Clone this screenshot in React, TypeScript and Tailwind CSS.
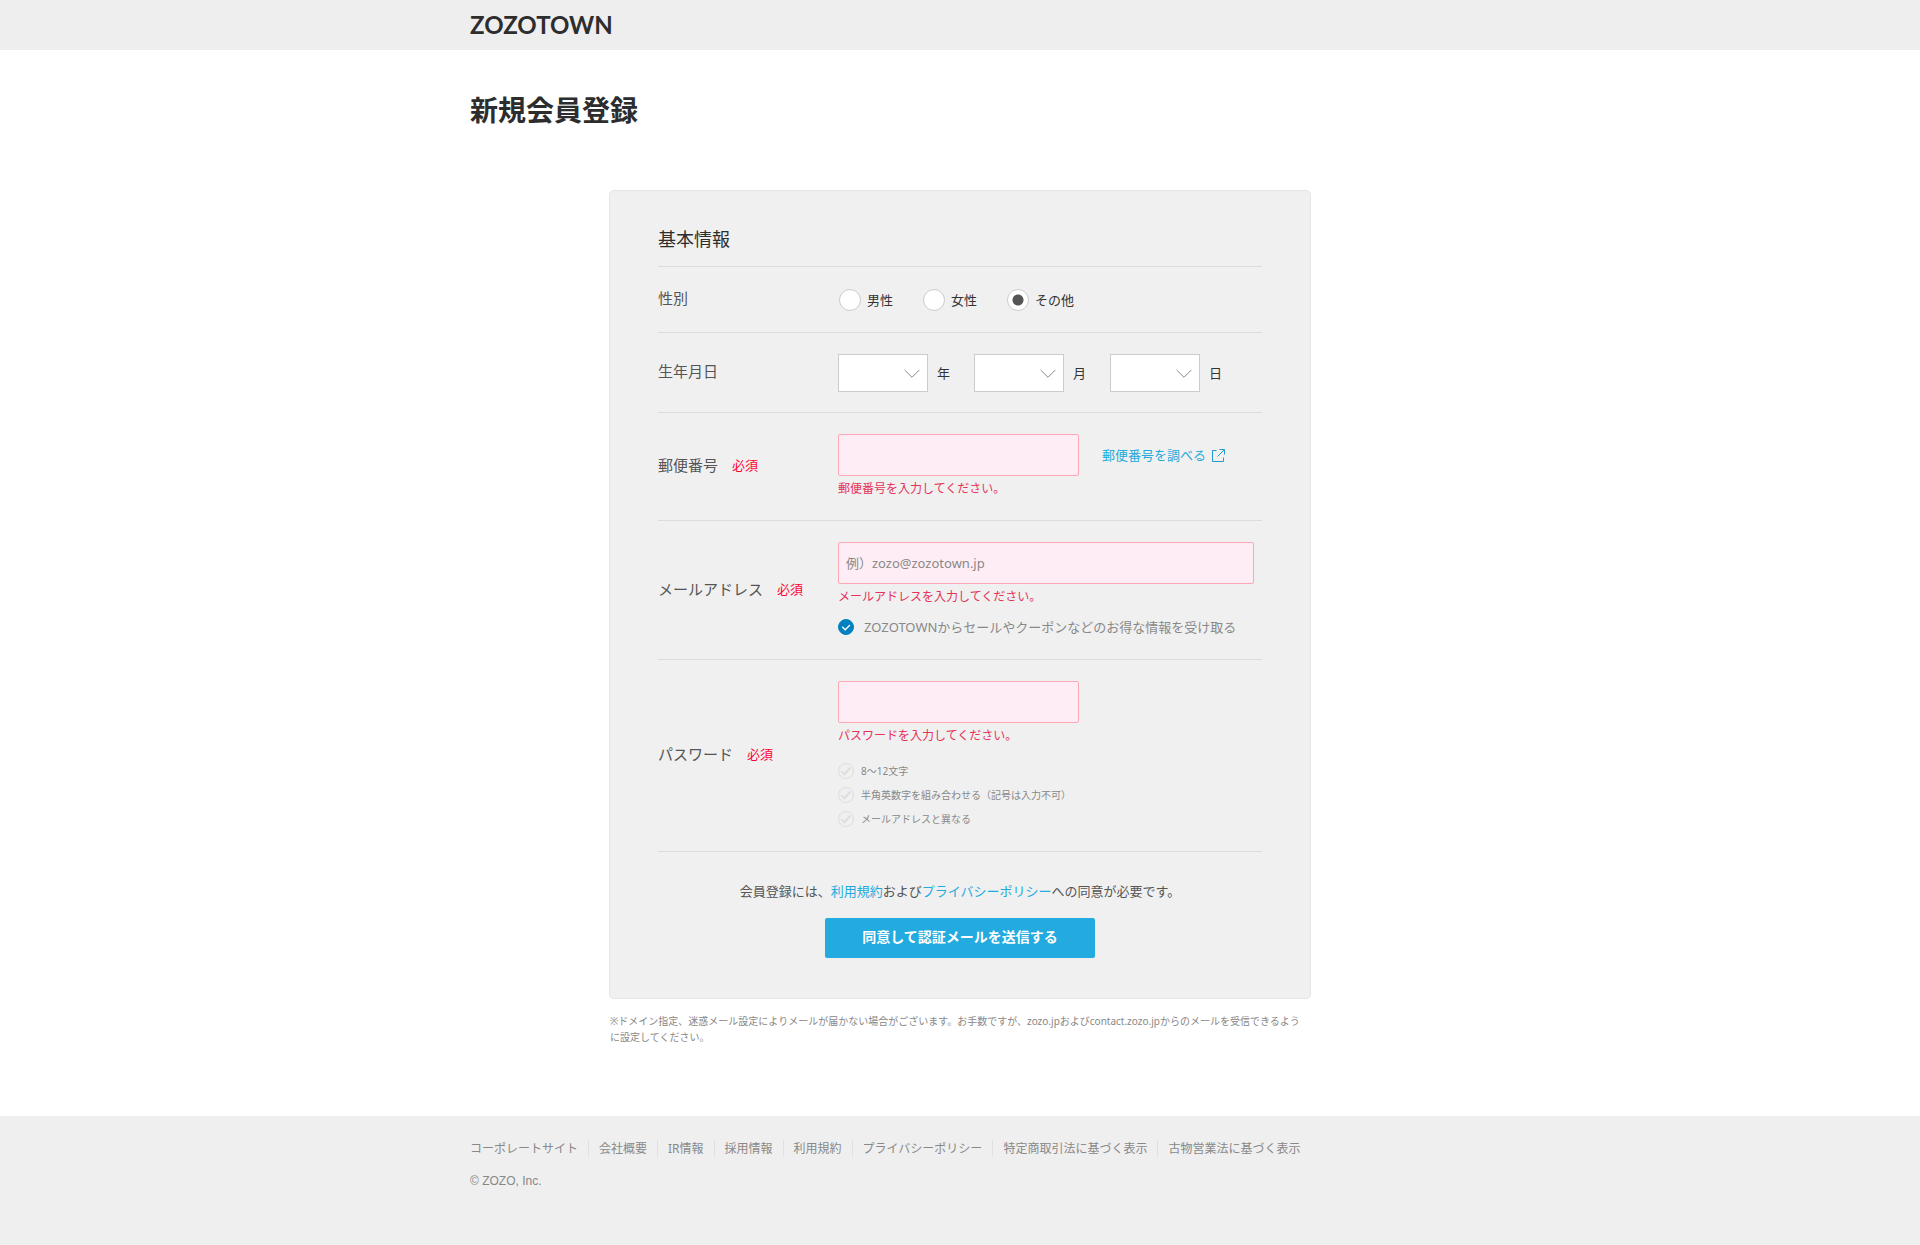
import { useState } from 'react';
import type { ReactNode } from 'react';

const GENDERS = ['男性', '女性', 'その他'];

const BIRTH_FIELDS = [
  { unit: '年', from: 1920, to: 2024 },
  { unit: '月', from: 1, to: 12 },
  { unit: '日', from: 1, to: 31 },
];

const PASSWORD_RULES = ['8～12文字', '半角英数字を組み合わせる（記号は入力不可）', 'メールアドレスと異なる'];

const FOOTER_LINKS = [
  'コーポレートサイト',
  '会社概要',
  'IR情報',
  '採用情報',
  '利用規約',
  'プライバシーポリシー',
  '特定商取引法に基づく表示',
  '古物営業法に基づく表示',
];

interface RowProps {
  label: string;
  htmlFor?: string;
  required?: boolean;
  children: ReactNode;
}

function Row({ label, htmlFor, required, children }: RowProps) {
  return (
    <div className="flex items-center border-b border-[#dcdcdc] pt-[21px] pb-5">
      <div className="flex w-[180px] shrink-0 items-center gap-[14px] pb-1">
        <label htmlFor={htmlFor} className="text-[15px] leading-5 text-[#555]">{label}</label>
        {required && <span className="text-[13px] leading-5 text-[#ff0033]">必須</span>}
      </div>
      <div className="min-w-0 flex-1">{children}</div>
    </div>
  );
}

function ErrorText({ children }: { children: ReactNode }) {
  return <p className="pt-0.5 text-xs leading-[22px] text-[#e7325a]">{children}</p>;
}

function ExternalIcon() {
  return (
    <svg width="13" height="13" viewBox="0 0 13 13" fill="none" stroke="#2499d3" aria-hidden="true">
      <path d="M4.5 1.5H.5V12.5H11.5V8.5M7.5 .5H12.5V5.5M12.3 .7L5.5 7.5" />
    </svg>
  );
}

function RuleIcon() {
  return (
    <svg width="16" height="16" viewBox="0 0 16 16" fill="none" stroke="#dcdcdc" aria-hidden="true">
      <circle cx="8" cy="8" r="7.5" />
      <path d="M3.4 8.4L6.4 11.2L12.4 4.6" strokeWidth="1.8" />
    </svg>
  );
}

const inputClass =
  'block h-[42px] rounded-xs border border-[#ffa7b5] bg-[#ffedf5] px-[7px] text-[13px] text-[#333] placeholder-[#888] focus:outline-none';

export default function App() {
  const [gender, setGender] = useState('その他');
  const [zip, setZip] = useState('');
  const [email, setEmail] = useState('');
  const [password, setPassword] = useState('');
  const [newsletter, setNewsletter] = useState(true);

  return (
    <div className="flex min-h-screen flex-col bg-white font-['Noto_Sans','Noto_Sans_CJK_JP',sans-serif] text-[#333]">
      <header className="bg-[#eee]">
        <div className="mx-auto flex h-[50px] max-w-[980px] items-center">
          <a href="#" className="font-['Lato',sans-serif] text-2xl leading-none font-bold text-[#2d2d2d]">ZOZOTOWN</a>
        </div>
      </header>

      <main className="mx-auto w-full max-w-[980px] flex-1 pb-[70px]">
        <h1 className="pt-10 text-[28px] leading-10 font-bold text-[#2d2d2d]">新規会員登録</h1>

        <div className="mx-auto mt-[60px] max-w-[702px]">
          <form
            onSubmit={(e) => e.preventDefault()}
            className="rounded-[5px] border border-[#e5e5e5] bg-[#f0f0f0] px-12 pb-10"
          >
            <h2 className="border-b border-[#dcdcdc] pt-[34px] pb-[13px] text-lg leading-7 text-[#2d2d2d]">基本情報</h2>

            <Row label="性別">
              <div className="flex gap-[29px]">
                {GENDERS.map((name) => (
                  <label key={name} className="flex items-center gap-[6px] text-[13px] leading-6">
                    <input
                      type="radio"
                      name="gender"
                      checked={gender === name}
                      onChange={() => setGender(name)}
                      className="ml-px size-[22px] appearance-none rounded-full border border-[#ccc] bg-white checked:bg-[radial-gradient(circle,#555_5px,#fff_6px)]"
                    />
                    {name}
                  </label>
                ))}
              </div>
            </Row>

            {/* Birthday */}
            <Row label="生年月日">
              <div className="flex gap-6">
                {BIRTH_FIELDS.map((field) => (
                  <label key={field.unit} className="flex items-center gap-[9px] text-[13px] leading-6">
                    <span className="relative">
                      <select className="block h-[38px] w-[90px] appearance-none border border-[#ccc] bg-white px-2 focus:outline-none">
                        <option value=""></option>
                        {Array.from({ length: field.to - field.from + 1 }, (_, i) => (
                          <option key={i}>{field.from + i}</option>
                        ))}
                      </select>
                      <svg
                        className="pointer-events-none absolute top-[15px] right-2"
                        width="16"
                        height="10"
                        viewBox="0 0 16 10"
                        fill="none"
                        stroke="#888"
                        aria-hidden="true"
                      >
                        <path d="M.7 1L8 8.3L15.3 1" />
                      </svg>
                    </span>
                    {field.unit}
                  </label>
                ))}
              </div>
            </Row>

            <Row label="郵便番号" htmlFor="zip" required>
              <div className="flex items-center gap-[23px]">
                <input
                  id="zip"
                  type="text"
                  value={zip}
                  onChange={(e) => setZip(e.target.value)}
                  className={`${inputClass} w-[241px]`}
                />
                <a href="#" className="flex items-center gap-[6px] text-[13px] leading-6 text-[#23abdd]">
                  郵便番号を調べる
                  <ExternalIcon />
                </a>
              </div>
              <ErrorText>郵便番号を入力してください。</ErrorText>
            </Row>

            <Row label="メールアドレス" htmlFor="email" required>
              <input
                id="email"
                type="email"
                value={email}
                onChange={(e) => setEmail(e.target.value)}
                placeholder="例）zozo@zozotown.jp"
                className={`${inputClass} w-full max-w-[416px]`}
              />
              <ErrorText>メールアドレスを入力してください。</ErrorText>
              <label className="mt-[7px] flex items-center gap-[10px] text-[13px] leading-6 text-[#888]">
                <span className="relative size-4">
                  <input
                    type="checkbox"
                    checked={newsletter}
                    onChange={(e) => setNewsletter(e.target.checked)}
                    className="block size-4 appearance-none rounded-full border border-[#ccc] bg-white checked:border-[#0080c0] checked:bg-[#0080c0]"
                  />
                  <svg
                    className="pointer-events-none absolute inset-0"
                    width="16"
                    height="16"
                    viewBox="0 0 16 16"
                    fill="none"
                    stroke="#fff"
                    strokeWidth="1.3"
                    aria-hidden="true"
                  >
                    <path d="M4.2 7.8L7.2 10.8L12 6" />
                  </svg>
                </span>
                ZOZOTOWNからセールやクーポンなどのお得な情報を受け取る
              </label>
            </Row>

            <Row label="パスワード" htmlFor="password" required>
              <input
                id="password"
                type="password"
                value={password}
                onChange={(e) => setPassword(e.target.value)}
                className={`${inputClass} w-[241px]`}
              />
              <ErrorText>パスワードを入力してください。</ErrorText>
              <ul className="mt-3">
                {PASSWORD_RULES.map((rule) => (
                  <li key={rule} className="flex items-center gap-[7px] text-[10px] leading-6 text-[#888]">
                    <RuleIcon />
                    {rule}
                  </li>
                ))}
              </ul>
            </Row>

            {/* Agreement and submit */}
            <p className="mt-[27px] text-center text-[13px] leading-6 text-[#555]">
              会員登録には、
              <a href="#" className="text-[#23abdd]">利用規約</a>
              および
              <a href="#" className="text-[#23abdd]">プライバシーポリシー</a>
              への同意が必要です。
            </p>
            <button
              type="submit"
              className="mx-auto mt-[15px] block h-10 w-[270px] rounded-xs bg-[#23abdf] pb-0.5 text-sm font-bold text-white"
            >
              同意して認証メールを送信する
            </button>
          </form>

          <p className="mt-[14px] pr-1 pl-px text-[10px] leading-4 text-[#888]">
            ※ドメイン指定、迷惑メール設定によりメールが届かない場合がございます。お手数ですが、zozo.jpおよびcontact.zozo.jpからのメールを受信できるように設定してください。
          </p>
        </div>
      </main>

      <footer className="bg-[#efefef] pt-6 pb-[54px] text-xs text-[#888]">
        <div className="mx-auto max-w-[980px]">
          <ul className="flex flex-wrap">
            {FOOTER_LINKS.map((name) => (
              <li key={name} className="mr-[10px] border-r border-[#e0e0e0] pr-[10px] leading-[17px] last:mr-0 last:border-0">
                <a href="#">{name}</a>
              </li>
            ))}
          </ul>
          <small className="mt-[14px] block font-['Liberation_Sans',sans-serif] text-xs leading-5">© ZOZO, Inc.</small>
        </div>
      </footer>
    </div>
  );
}
